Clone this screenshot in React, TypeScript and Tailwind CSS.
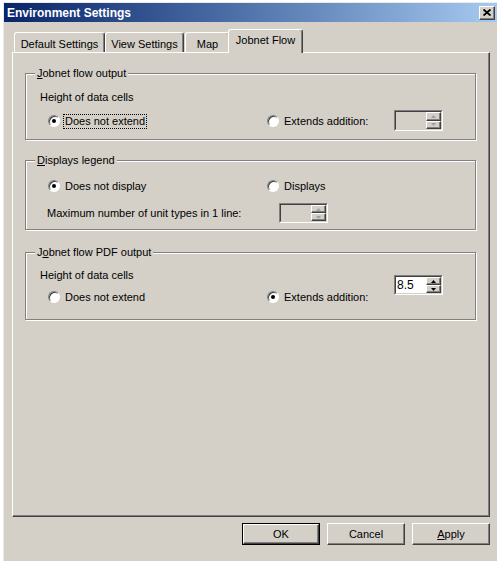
import React from "react";

const raised =
  "border border-t-white border-l-white border-r-[#404040] border-b-[#404040] shadow-[inset_-1px_-1px_0_#808080]";

function Radio({ checked }: { checked?: boolean }) {
  return (
    <span className="inline-flex h-[12px] w-[12px] shrink-0 items-center justify-center rounded-full border border-t-[#808080] border-l-[#808080] border-r-white border-b-white bg-white shadow-[inset_1px_1px_0_#404040]">
      {checked && <span className="h-[4px] w-[4px] rounded-full bg-black" />}
    </span>
  );
}

function RadioItem({
  label,
  checked,
  focused,
}: {
  label: string;
  checked?: boolean;
  focused?: boolean;
}) {
  return (
    <div className="flex h-[16px] items-center">
      <Radio checked={checked} />
      {focused ? (
        <span className="ml-[3px] border border-dotted border-black px-[1px] leading-[13px]">
          {label}
        </span>
      ) : (
        <span className="ml-[5px] leading-[14px]">{label}</span>
      )}
    </div>
  );
}

function SpinBtn({ up, disabled }: { up?: boolean; disabled?: boolean }) {
  const fill = disabled ? "#a0a0a0" : "#000";
  return (
    <div className={`flex flex-1 items-center justify-center bg-[#d4d0c8] ${raised}`}>
      <svg width="5" height="3" viewBox="0 0 5 3">
        {up ? <path d="M2.5 0 L5 3 L0 3 Z" fill={fill} /> : <path d="M0 0 L5 0 L2.5 3 Z" fill={fill} />}
      </svg>
    </div>
  );
}

function Spin({ value, disabled, h }: { value?: string; disabled?: boolean; h: string }) {
  return (
    <div className={`${h} w-[49px] border border-t-[#808080] border-l-[#808080] border-r-white border-b-white`}>
      <div
        className={`flex h-full border border-t-[#404040] border-l-[#404040] border-r-[#d4d0c8] border-b-[#d4d0c8] ${
          disabled ? "bg-[#d4d0c8]" : "bg-white"
        }`}
      >
        <div className="flex-1 pl-[1px] text-[12px] leading-[16px]">{value}</div>
        <div className="flex w-[15px] flex-col">
          <SpinBtn up disabled={disabled} />
          <SpinBtn disabled={disabled} />
        </div>
      </div>
    </div>
  );
}

function Group({
  label,
  h,
  mt,
  children,
}: {
  label: React.ReactNode;
  h: string;
  mt: string;
  children: React.ReactNode;
}) {
  return (
    <div
      className={`relative ${mt} ${h} ml-[12px] mr-[13px] border border-[#808080] shadow-[inset_1px_1px_0_#fff,1px_1px_0_#fff]`}
    >
      <span className="absolute left-[9px] top-[-8px] bg-[#d4d0c8] px-[2px] leading-[14px]">{label}</span>
      {children}
    </div>
  );
}

function Tab({ label, w, selected, extra }: { label: string; w: string; selected?: boolean; extra?: string }) {
  return (
    <div
      className={`${w} ${extra ?? ""} flex items-start justify-center rounded-t-[3px] border-t border-l border-r border-t-white border-l-white border-r-[#404040] bg-[#d4d0c8] shadow-[inset_-1px_0_0_#808080] ${
        selected ? "relative z-10 mb-[-1px] h-[24px] pt-[3px]" : "h-[20px] pt-[4px]"
      }`}
    >
      <span className="leading-[14px]">{label}</span>
    </div>
  );
}

function DlgButton({ children, def }: { children: React.ReactNode; def?: boolean }) {
  return (
    <div className={`h-[22px] w-[78px] ${def ? "border border-black" : ""}`}>
      <div className={`flex h-full items-center justify-center bg-[#d4d0c8] ${raised}`}>
        <span className="leading-[14px]">{children}</span>
      </div>
    </div>
  );
}

export default function App() {
  return (
    <div className="h-[561px] w-[499px] overflow-hidden bg-white pl-[3px] pt-[2px] font-['Liberation_Sans',Arial,sans-serif] text-[11px] text-black">
      <div className="flex h-[570px] w-[494px] flex-col border-l border-t border-[#eceae4] bg-[#d4d0c8]">
        {/* title bar */}
        <div className="flex h-[19px] items-center justify-between bg-gradient-to-r from-[#0a246a] to-[#a6caf0] pl-[3px] pr-[2px]">
          <span className="text-[12px] font-bold leading-[14px] text-white">Environment Settings</span>
          <div className={`flex h-[14px] w-[16px] items-center justify-center bg-[#d4d0c8] ${raised}`}>
            <svg width="8" height="7" viewBox="0 0 8 7">
              <path d="M0.5 0.5 L7.5 6.5 M7.5 0.5 L0.5 6.5" stroke="#000" strokeWidth="1.8" />
            </svg>
          </div>
        </div>

        <div className="pl-[8px] pr-[7px] pt-[7px]">
          {/* tabs */}
          <div className="flex h-[23px] items-end pl-[2px]">
            <Tab label="Default Settings" w="w-[91px]" />
            <Tab label="View Settings" w="w-[79px]" />
            <Tab label="Map" w="w-[45px]" extra="ml-[1px]" />
            <Tab label="Jobnet Flow" w="w-[75px]" extra="ml-[-2px]" selected />
          </div>

          {/* panel */}
          <div className="h-[465px] border border-t-white border-l-white border-r-[#404040] border-b-[#404040] pt-[20px] shadow-[inset_-1px_-1px_0_#808080]">
            <Group
              mt="mt-0"
              h="h-[67px]"
              label={
                <>
                  <span className="underline">J</span>obnet flow output
                </>
              }
            >
              <div className="flex items-start pt-[16px]">
                <div className="w-[241px]">
                  <div className="pl-[14px] leading-[14px]">Height of data cells</div>
                  <div className="mt-[9px] pl-[22px]">
                    <RadioItem label="Does not extend" checked focused />
                  </div>
                </div>
                <div className="mt-[23px] w-[127px]">
                  <RadioItem label="Extends addition:" />
                </div>
                <div className="mt-[20px]">
                  <Spin disabled h="h-[21px]" />
                </div>
              </div>
            </Group>

            <Group
              mt="mt-[20px]"
              h="h-[70px]"
              label={
                <>
                  <span className="underline">D</span>isplays legend
                </>
              }
            >
              <div className="flex pl-[22px] pt-[17px]">
                <div className="w-[219px]">
                  <RadioItem label="Does not display" checked />
                </div>
                <RadioItem label="Displays" />
              </div>
              <div className="mt-[9px] flex items-center pl-[21px]">
                <div className="w-[232px] leading-[14px]">Maximum number of unit types in 1 line:</div>
                <Spin disabled h="h-[20px]" />
              </div>
            </Group>

            <Group
              mt="mt-[22px]"
              h="h-[68px]"
              label={
                <>
                  J<span className="underline">o</span>bnet flow PDF output
                </>
              }
            >
              <div className="flex items-start pt-[15px]">
                <div className="w-[241px]">
                  <div className="pl-[14px] leading-[14px]">Height of data cells</div>
                  <div className="mt-[7px] pl-[22px]">
                    <RadioItem label="Does not extend" />
                  </div>
                </div>
                <div className="mt-[21px] w-[127px]">
                  <RadioItem label="Extends addition:" checked />
                </div>
                <div className="mt-[7px]">
                  <Spin value="8.5" h="h-[20px]" />
                </div>
              </div>
            </Group>
          </div>

          {/* dialog buttons */}
          <div className="mt-[6px] flex justify-end gap-[7px]">
            <DlgButton def>OK</DlgButton>
            <DlgButton>Cancel</DlgButton>
            <DlgButton>
              <span className="underline">A</span>pply
            </DlgButton>
          </div>
        </div>
      </div>
    </div>
  );
}
